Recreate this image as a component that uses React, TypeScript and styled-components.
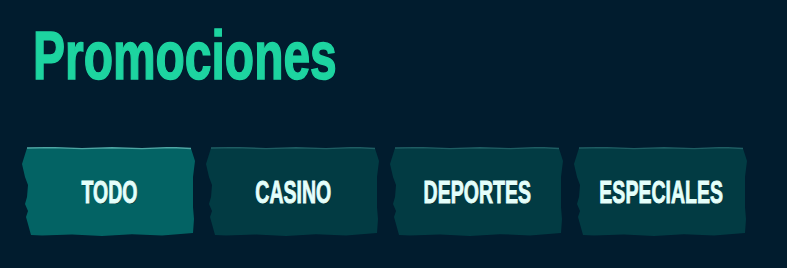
import React from "react";
import styled, { createGlobalStyle } from "styled-components";

const GlobalStyle = createGlobalStyle`
  html, body {
    margin: 0;
    padding: 0;
    background: #011c2e;
  }
  body {
    font-family: "Liberation Sans", Arial, sans-serif;
  }
`;

const Page = styled.div`
  width: 787px;
  height: 268px;
  box-sizing: border-box;
  padding: 21px 22px 0 22px;
  background: #011c2e;
  overflow: hidden;
`;

const Title = styled.h1`
  margin: 0 0 57px 11px;
  height: 69px;
  font-family: "Liberation Sans", Arial, sans-serif;
  font-size: 69px;
  line-height: 69px;
  font-weight: 700;
  color: #1dd4a0;
  -webkit-text-stroke: 1.6px #1dd4a0;
  letter-spacing: 0px;
  white-space: nowrap;
  transform: scaleX(0.695);
  transform-origin: left center;
`;

const Tabs = styled.div`
  display: flex;
  gap: 10px;
`;

const Tab = styled.button<{ $active?: boolean }>`
  position: relative;
  width: 174px;
  height: 90px;
  padding: 0;
  border: none;
  background: transparent;
  display: flex;
  align-items: center;
  justify-content: center;
  cursor: pointer;
  color: #e4fffb;
`;

const Shape = styled.svg`
  position: absolute;
  inset: 0;
  width: 100%;
  height: 100%;
  z-index: 0;
`;

const Label = styled.span`
  position: relative;
  z-index: 1;
  font-family: "Liberation Sans", Arial, sans-serif;
  font-size: 31px;
  line-height: 1;
  font-weight: 700;
  -webkit-text-stroke: 0.9px #e4fffb;
  transform: scaleX(0.63);
  text-shadow: 1px 1px 0 rgba(0, 20, 20, 0.55);
  white-space: nowrap;
`;

const OUTLINE =
  "M5,1 L30,0.6 L60,1.6 L90,0.8 L120,1.6 L150,0.5 L169,1.5 L173,14 L171,30 L171,45 L171,60 L172,72 L171,86 L140,88.4 L110,87.2 L80,89 L50,87.6 L20,88.6 L9,88 L4,70 L6,64 L3,57 L5,50 L6,38 L3,30 L0,17 Z";
const TOP_EDGE = "M5,1 L30,0.6 L60,1.6 L90,0.8 L120,1.6 L150,0.5 L169,1.5";

const tabs = [
  { label: "TODO", active: true },
  { label: "CASINO", active: false },
  { label: "DEPORTES", active: false },
  { label: "ESPECIALES", active: false },
];

function TabShape({ active }: { active: boolean }) {
  return (
    <Shape viewBox="0 0 174 90" preserveAspectRatio="none" aria-hidden="true">
      <path d={OUTLINE} fill={active ? "#036364" : "#023b43"} />
      <path
        d={TOP_EDGE}
        fill="none"
        stroke={active ? "#4fa6a4" : "#1f5d63"}
        strokeWidth={1.4}
      />
    </Shape>
  );
}

export default function App() {
  return (
    <>
      <GlobalStyle />
      <Page>
        <Title>Promociones</Title>
        <Tabs>
          {tabs.map((t) => (
            <Tab key={t.label} $active={t.active}>
              <TabShape active={t.active} />
              <Label>{t.label}</Label>
            </Tab>
          ))}
        </Tabs>
      </Page>
    </>
  );
}
